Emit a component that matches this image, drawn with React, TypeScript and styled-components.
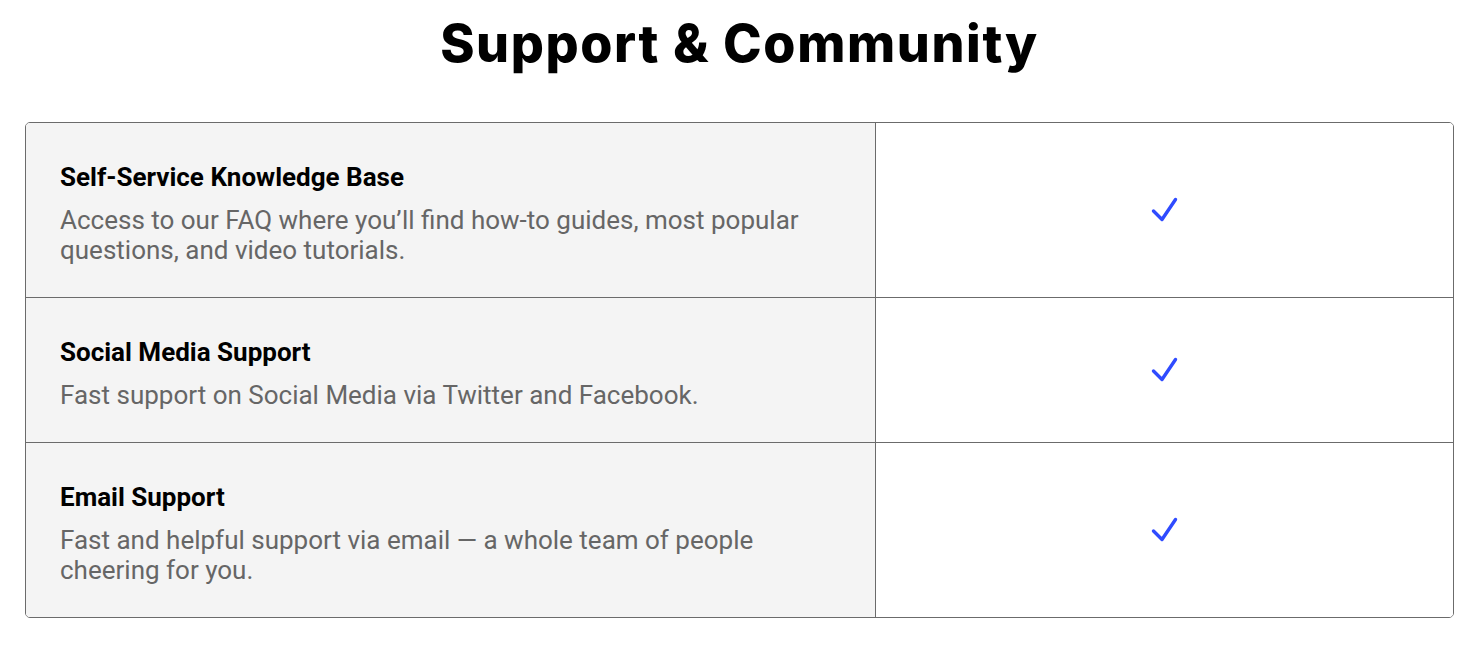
import styled, { createGlobalStyle } from "styled-components";

interface IFeature {
  title: string;
  text: string;
}

const features: IFeature[] = [
  {
    title: "Self-Service Knowledge Base",
    text: "Access to our FAQ where you’ll find how-to guides, most popular questions, and video tutorials.",
  },
  {
    title: "Social Media Support",
    text: "Fast support on Social Media via Twitter and Facebook.",
  },
  {
    title: "Email Support",
    text: "Fast and helpful support via email — a whole team of people cheering for you.",
  },
];

const GlobalStyle = createGlobalStyle`
  body {
    margin: 0;
    background: #fff;
    font-family: Roboto, "Liberation Sans", sans-serif;
  }
`;

const Page = styled.div`
  padding: 8px 20px 28px 25px;
`;

const Heading = styled.h1`
  margin: 0 0 42px;
  text-align: center;
  font-family: Inter, "Liberation Sans", sans-serif;
  font-weight: 800;
  font-size: 52px;
  line-height: 72px;
  letter-spacing: 1.6px;
  color: #000;
`;

const Table = styled.div`
  display: grid;
  grid-template-columns: 850px 1fr;
  border: 1px solid #6b6b6b;
  border-radius: 5px;
  overflow: hidden;
`;

const Info = styled.div<{ $last?: boolean }>`
  background: #f4f4f4;
  padding: 40px 34px 32px;
  border-right: 1px solid #6b6b6b;
  border-bottom: ${(p) => (p.$last ? "none" : "1px solid #6b6b6b")};
`;

const Mark = styled.div<{ $last?: boolean }>`
  display: flex;
  align-items: center;
  justify-content: center;
  background: #fff;
  border-bottom: ${(p) => (p.$last ? "none" : "1px solid #6b6b6b")};
`;

const Title = styled.div`
  font-weight: 700;
  font-size: 26px;
  line-height: 28px;
  color: #000;
  margin-bottom: 14px;
`;

const Text = styled.div`
  font-size: 26px;
  line-height: 30px;
  color: #666;
  max-width: 760px;
`;

function Check() {
  return (
    <svg width="27" height="26" viewBox="0 0 27 26" fill="none">
      <path
        d="M2.5 14 L11 22.5 L24.5 2.5"
        stroke="#2f4bff"
        strokeWidth="3.4"
        strokeLinecap="round"
        strokeLinejoin="round"
      />
    </svg>
  );
}

function App() {
  return (
    <Page>
      <GlobalStyle />
      <Heading>Support &amp; Community</Heading>
      <Table>
        {features.map((item, index) => {
          const last = index === features.length - 1;
          return [
            <Info key={"i" + index} $last={last}>
              <Title>{item.title}</Title>
              <Text>{item.text}</Text>
            </Info>,
            <Mark key={"m" + index} $last={last}>
              <Check />
            </Mark>,
          ];
        })}
      </Table>
    </Page>
  );
}

export default App;
